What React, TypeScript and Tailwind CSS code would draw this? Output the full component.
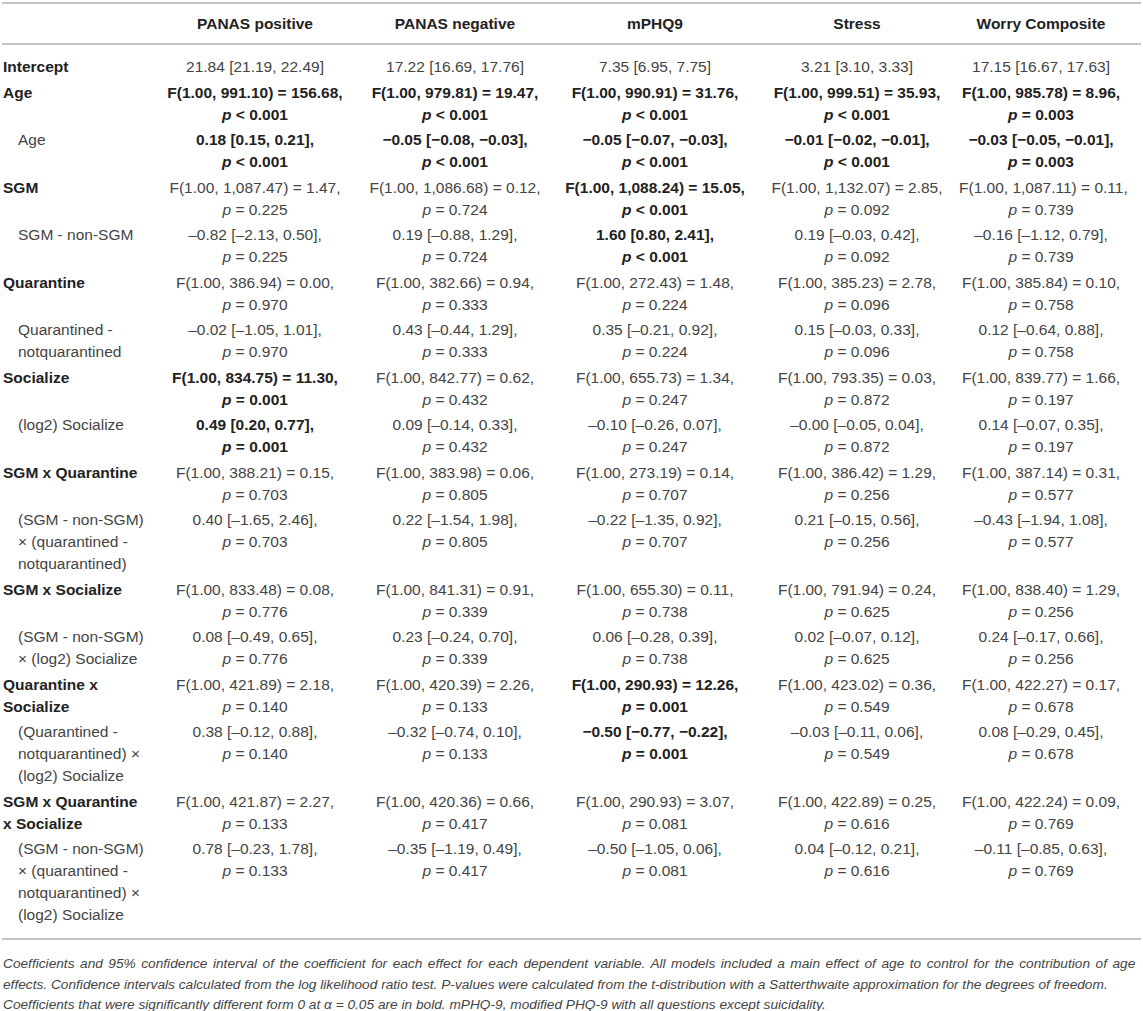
import React from "react";

type Cell = { b?: boolean; l1: string; p?: string };
type Row = { label: string[]; sub?: boolean; cells: Cell[] };

const heads = ["PANAS positive", "PANAS negative", "mPHQ9", "Stress", "Worry Composite"];

const c = (l1: string, p?: string, b?: boolean): Cell => ({ l1, p, b });

const rows: Row[] = [
  {
    label: ["Intercept"],
    cells: [
      c("21.84 [21.19, 22.49]"),
      c("17.22 [16.69, 17.76]"),
      c("7.35 [6.95, 7.75]"),
      c("3.21 [3.10, 3.33]"),
      c("17.15 [16.67, 17.63]"),
    ],
  },
  {
    label: ["Age"],
    cells: [
      c("F(1.00, 991.10) = 156.68,", "< 0.001", true),
      c("F(1.00, 979.81) = 19.47,", "< 0.001", true),
      c("F(1.00, 990.91) = 31.76,", "< 0.001", true),
      c("F(1.00, 999.51) = 35.93,", "< 0.001", true),
      c("F(1.00, 985.78) = 8.96,", "= 0.003", true),
    ],
  },
  {
    label: ["Age"],
    sub: true,
    cells: [
      c("0.18 [0.15, 0.21],", "< 0.001", true),
      c("−0.05 [−0.08, −0.03],", "< 0.001", true),
      c("−0.05 [−0.07, −0.03],", "< 0.001", true),
      c("−0.01 [−0.02, −0.01],", "< 0.001", true),
      c("−0.03 [−0.05, −0.01],", "= 0.003", true),
    ],
  },
  {
    label: ["SGM"],
    cells: [
      c("F(1.00, 1,087.47) = 1.47,", "= 0.225"),
      c("F(1.00, 1,086.68) = 0.12,", "= 0.724"),
      c("F(1.00, 1,088.24) = 15.05,", "< 0.001", true),
      c("F(1.00, 1,132.07) = 2.85,", "= 0.092"),
      c("F(1.00, 1,087.11) = 0.11,", "= 0.739"),
    ],
  },
  {
    label: ["SGM - non-SGM"],
    sub: true,
    cells: [
      c("–0.82 [–2.13, 0.50],", "= 0.225"),
      c("0.19 [–0.88, 1.29],", "= 0.724"),
      c("1.60 [0.80, 2.41],", "< 0.001", true),
      c("0.19 [–0.03, 0.42],", "= 0.092"),
      c("–0.16 [–1.12, 0.79],", "= 0.739"),
    ],
  },
  {
    label: ["Quarantine"],
    cells: [
      c("F(1.00, 386.94) = 0.00,", "= 0.970"),
      c("F(1.00, 382.66) = 0.94,", "= 0.333"),
      c("F(1.00, 272.43) = 1.48,", "= 0.224"),
      c("F(1.00, 385.23) = 2.78,", "= 0.096"),
      c("F(1.00, 385.84) = 0.10,", "= 0.758"),
    ],
  },
  {
    label: ["Quarantined -", "notquarantined"],
    sub: true,
    cells: [
      c("–0.02 [–1.05, 1.01],", "= 0.970"),
      c("0.43 [–0.44, 1.29],", "= 0.333"),
      c("0.35 [–0.21, 0.92],", "= 0.224"),
      c("0.15 [–0.03, 0.33],", "= 0.096"),
      c("0.12 [–0.64, 0.88],", "= 0.758"),
    ],
  },
  {
    label: ["Socialize"],
    cells: [
      c("F(1.00, 834.75) = 11.30,", "= 0.001", true),
      c("F(1.00, 842.77) = 0.62,", "= 0.432"),
      c("F(1.00, 655.73) = 1.34,", "= 0.247"),
      c("F(1.00, 793.35) = 0.03,", "= 0.872"),
      c("F(1.00, 839.77) = 1.66,", "= 0.197"),
    ],
  },
  {
    label: ["(log2) Socialize"],
    sub: true,
    cells: [
      c("0.49 [0.20, 0.77],", "= 0.001", true),
      c("0.09 [–0.14, 0.33],", "= 0.432"),
      c("–0.10 [–0.26, 0.07],", "= 0.247"),
      c("–0.00 [–0.05, 0.04],", "= 0.872"),
      c("0.14 [–0.07, 0.35],", "= 0.197"),
    ],
  },
  {
    label: ["SGM x Quarantine"],
    cells: [
      c("F(1.00, 388.21) = 0.15,", "= 0.703"),
      c("F(1.00, 383.98) = 0.06,", "= 0.805"),
      c("F(1.00, 273.19) = 0.14,", "= 0.707"),
      c("F(1.00, 386.42) = 1.29,", "= 0.256"),
      c("F(1.00, 387.14) = 0.31,", "= 0.577"),
    ],
  },
  {
    label: ["(SGM - non-SGM)", "× (quarantined -", "notquarantined)"],
    sub: true,
    cells: [
      c("0.40 [–1.65, 2.46],", "= 0.703"),
      c("0.22 [–1.54, 1.98],", "= 0.805"),
      c("–0.22 [–1.35, 0.92],", "= 0.707"),
      c("0.21 [–0.15, 0.56],", "= 0.256"),
      c("–0.43 [–1.94, 1.08],", "= 0.577"),
    ],
  },
  {
    label: ["SGM x Socialize"],
    cells: [
      c("F(1.00, 833.48) = 0.08,", "= 0.776"),
      c("F(1.00, 841.31) = 0.91,", "= 0.339"),
      c("F(1.00, 655.30) = 0.11,", "= 0.738"),
      c("F(1.00, 791.94) = 0.24,", "= 0.625"),
      c("F(1.00, 838.40) = 1.29,", "= 0.256"),
    ],
  },
  {
    label: ["(SGM - non-SGM)", "× (log2) Socialize"],
    sub: true,
    cells: [
      c("0.08 [–0.49, 0.65],", "= 0.776"),
      c("0.23 [–0.24, 0.70],", "= 0.339"),
      c("0.06 [–0.28, 0.39],", "= 0.738"),
      c("0.02 [–0.07, 0.12],", "= 0.625"),
      c("0.24 [–0.17, 0.66],", "= 0.256"),
    ],
  },
  {
    label: ["Quarantine x", "Socialize"],
    cells: [
      c("F(1.00, 421.89) = 2.18,", "= 0.140"),
      c("F(1.00, 420.39) = 2.26,", "= 0.133"),
      c("F(1.00, 290.93) = 12.26,", "= 0.001", true),
      c("F(1.00, 423.02) = 0.36,", "= 0.549"),
      c("F(1.00, 422.27) = 0.17,", "= 0.678"),
    ],
  },
  {
    label: ["(Quarantined -", "notquarantined) ×", "(log2) Socialize"],
    sub: true,
    cells: [
      c("0.38 [–0.12, 0.88],", "= 0.140"),
      c("–0.32 [–0.74, 0.10],", "= 0.133"),
      c("−0.50 [−0.77, −0.22],", "= 0.001", true),
      c("–0.03 [–0.11, 0.06],", "= 0.549"),
      c("0.08 [–0.29, 0.45],", "= 0.678"),
    ],
  },
  {
    label: ["SGM x Quarantine", "x Socialize"],
    cells: [
      c("F(1.00, 421.87) = 2.27,", "= 0.133"),
      c("F(1.00, 420.36) = 0.66,", "= 0.417"),
      c("F(1.00, 290.93) = 3.07,", "= 0.081"),
      c("F(1.00, 422.89) = 0.25,", "= 0.616"),
      c("F(1.00, 422.24) = 0.09,", "= 0.769"),
    ],
  },
  {
    label: ["(SGM - non-SGM)", "× (quarantined -", "notquarantined) ×", "(log2) Socialize"],
    sub: true,
    cells: [
      c("0.78 [–0.23, 1.78],", "= 0.133"),
      c("–0.35 [–1.19, 0.49],", "= 0.417"),
      c("–0.50 [–1.05, 0.06],", "= 0.081"),
      c("0.04 [–0.12, 0.21],", "= 0.616"),
      c("–0.11 [–0.85, 0.63],", "= 0.769"),
    ],
  },
];

export default function App() {
  return (
    <div className="w-[1143px] bg-white px-[2px] pt-[2px] font-['Liberation_Sans',Arial,sans-serif] text-[15.5px] leading-[22px] text-[#444]">
      <table className="w-full table-fixed border-collapse">
        <colgroup>
          <col className="w-[153px]" />
          <col className="w-[200px]" />
          <col className="w-[200px]" />
          <col className="w-[200px]" />
          <col className="w-[204px]" />
          <col />
        </colgroup>
        <thead>
          <tr className="border-y-2 border-[#c2c2c2]">
            <th className="py-[8.5px]" />
            {heads.map((h, i) => (
              <th
                key={h}
                className={`py-[8.5px] text-center font-bold text-[#222] ${i === 4 ? "pr-[18px]" : ""}`}
              >
                {h}
              </th>
            ))}
          </tr>
        </thead>
        <tbody>
          {rows.map((r, ri) => {
            const pad =
              ri === 0
                ? "pt-[11px] pb-[1.75px]"
                : ri === rows.length - 1
                  ? "pt-[1.75px] pb-[12px]"
                  : "py-[1.75px]";
            return (
              <tr key={ri} className={ri === rows.length - 1 ? "border-b-2 border-[#c2c2c2]" : ""}>
                <td
                  className={`align-top ${pad} ${
                    r.sub ? "pl-[16px]" : "pl-[1px] font-bold text-[#222]"
                  }`}
                >
                  {r.label.map((l, li) => (
                    <div key={li} className="whitespace-nowrap">
                      {l}
                    </div>
                  ))}
                </td>
                {r.cells.map((cell, ci) => (
                  <td
                    key={ci}
                    className={`align-top text-center ${pad} ${ci === 4 ? "pr-[18px]" : ""} ${
                      cell.b ? "font-bold text-[#222]" : ""
                    }`}
                  >
                    <div className="whitespace-nowrap">{cell.l1}</div>
                    {cell.p && (
                      <div className="whitespace-nowrap">
                        <span className="italic">p</span> {cell.p}
                      </div>
                    )}
                  </td>
                ))}
              </tr>
            );
          })}
        </tbody>
      </table>
      <div className="pt-[14px] pl-[1px] text-[13.7px] leading-[20.5px] italic text-[#444]">
        <div className="whitespace-nowrap [word-spacing:1.7px]">
          Coefficients and 95% confidence interval of the coefficient for each effect for each dependent
          variable. All models included a main effect of age to control for the contribution of age
        </div>
        <div className="whitespace-nowrap">
          effects. Confidence intervals calculated from the log likelihood ratio test. P-values were calculated
          from the t-distribution with a Satterthwaite approximation for the degrees of freedom.
        </div>
        <div className="whitespace-nowrap">
          Coefficients that were significantly different form 0 at α = 0.05 are in bold. mPHQ-9, modified PHQ-9
          with all questions except suicidality.
        </div>
      </div>
    </div>
  );
}
